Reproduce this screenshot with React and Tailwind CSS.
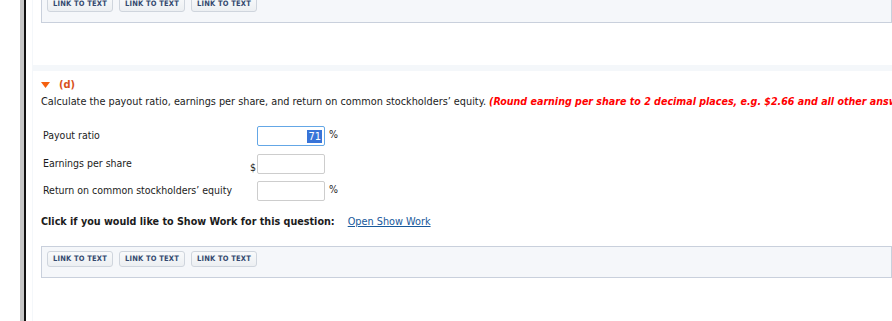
import React from "react";

const font = { fontFamily: "Tahoma, 'DejaVu Sans Condensed', 'Liberation Sans', sans-serif" };

function LinkBtn() {
  return (
    <button className="h-[16px] w-[66px] rounded-[3px] border border-[#cfd5dd] bg-gradient-to-b from-[#f9fafb] to-[#eceff2] text-[7.5px] font-bold tracking-[0.2px] text-[#34496f] leading-none">
      LINK TO TEXT
    </button>
  );
}

function LinkBar() {
  return (
    <div className="ml-[8px] h-[32px] border border-[#c9d0dc] bg-[#f5f7fa] flex items-start gap-[6px] pl-[5px] pt-[4px]">
      <LinkBtn />
      <LinkBtn />
      <LinkBtn />
    </div>
  );
}

export default function App() {
  return (
    <div className="relative w-[892px] h-[321px] overflow-hidden bg-white text-[#1c1c1c]" style={font}>
      <div className="flex h-full">
        <div className="w-[20px] shrink-0 bg-white" />
        <div className="w-[4px] shrink-0 bg-[#c6c6c6]" />
        <div className="w-[2px] shrink-0 bg-[#111]" />
        <div className="w-[6px] shrink-0 bg-white" />
        <div className="flex-1 min-w-0 bg-[#f4f7fa] pl-[1px] flex flex-col">
          {/* previous section */}
          <div className="bg-white h-[74px] shrink-0 -mt-[9px]">
            <LinkBar />
          </div>
          <div className="h-[6px] shrink-0" />
          {/* section d */}
          <div className="bg-white flex-1 pt-[7px]">
            <div className="flex items-center gap-[9px] ml-[8px] h-[14px]">
              <svg width="9" height="6" viewBox="0 0 9 6"><polygon points="0,0 9,0 4.5,6" fill="#f4600f" /></svg>
              <span className="text-[11px] font-bold text-[#d9521c]">(d)</span>
            </div>
            <div className="ml-[8px] mt-[2px] whitespace-nowrap text-[10.8px] leading-[14px]">
              Calculate the payout ratio, earnings per share, and return on common stockholders’ equity.{" "}
              <span className="font-bold italic text-[#ff0000] text-[10.6px]">(Round earning per share to 2 decimal places, e.g. $2.66 and all other answers to 0 decimal places, e.g. 52.)</span>
            </div>
            <div className="ml-[10px] mt-[17px] flex flex-col gap-[7.5px] text-[10.5px]">
              <div className="flex items-start h-[20px]">
                <span className="w-[204px] mt-[2px]">Payout ratio</span>
                <div className="w-[10px]" />
                <div className="w-[68px] h-[20px] border border-[#64a7e6] rounded-[2px] flex items-center justify-end pr-[2px]">
                  <span className="bg-[#3874d8] text-white text-[11px] leading-[13px] px-[1px]">71</span>
                </div>
                <span className="ml-[4px] mt-[1px]">%</span>
              </div>
              <div className="flex items-start h-[20px]">
                <span className="w-[204px] mt-[2px]">Earnings per share</span>
                <div className="w-[10px] flex items-end justify-end h-[20px]"><span className="leading-none mb-[1px] mr-[1px]">$</span></div>
                <div className="w-[68px] h-[20px] border border-[#cdcdcd] rounded-[2px]" />
              </div>
              <div className="flex items-start h-[20px]">
                <span className="w-[204px] mt-[2px]">Return on common stockholders’ equity</span>
                <div className="w-[10px]" />
                <div className="w-[68px] h-[20px] border border-[#cdcdcd] rounded-[2px]" />
                <span className="ml-[4px] mt-[1px]">%</span>
              </div>
            </div>
            <div className="ml-[8px] mt-[13px] flex items-center text-[10.7px] whitespace-nowrap">
              <span className="font-bold">Click if you would like to Show Work for this question:</span>
              <span className="ml-[13px] text-[#18599b] underline text-[10.8px]">Open Show Work</span>
            </div>
            <div className="mt-[16px]">
              <LinkBar />
            </div>
          </div>
        </div>
      </div>
    </div>
  );
}
